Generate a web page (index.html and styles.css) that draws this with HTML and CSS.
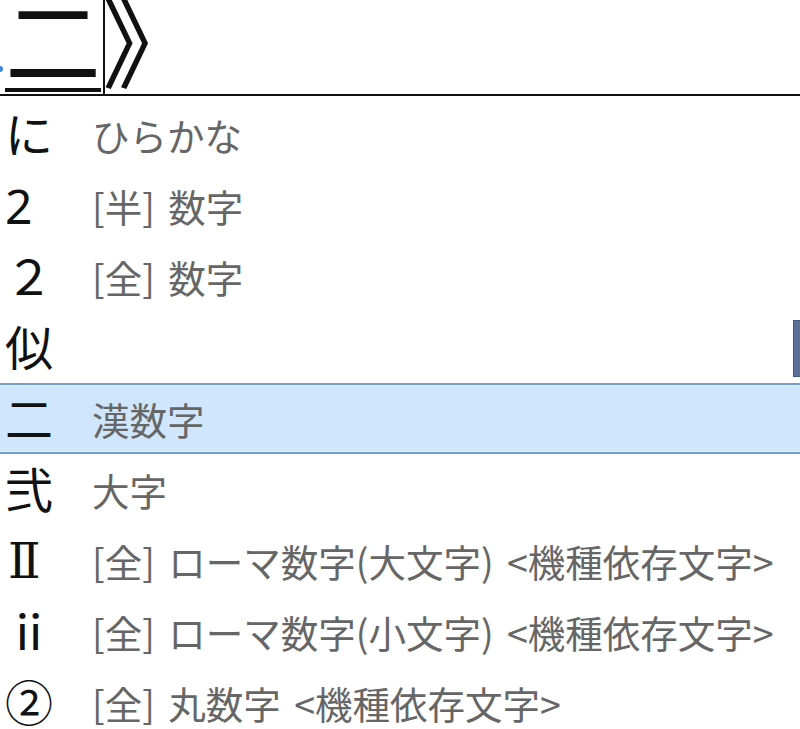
FILE: index.html
```html
<!DOCTYPE html>
<html lang="ja">
<head>
    <meta charset="UTF-8">
    <meta name="viewport" content="width=device-width, initial-scale=1.0">
    <title>IME 変換候補</title>
    <link rel="stylesheet" href="styles.css">
</head>
<body>
    <div class="preedit">
        <span class="dot"></span>
        <span class="reading">二</span>
        <span class="caret"></span>
        <span class="bracket">》</span>
    </div>

    <ul class="candidates">
        <li class="row"><span class="cand">に</span><span class="note">ひらかな</span></li>
        <li class="row"><span class="cand">2</span><span class="note">[半] 数字</span></li>
        <li class="row"><span class="cand">２</span><span class="note">[全] 数字</span></li>
        <li class="row"><span class="cand">似</span><span class="note"></span></li>
        <li class="row selected"><span class="cand">二</span><span class="note">漢数字</span></li>
        <li class="row"><span class="cand">弐</span><span class="note">大字</span></li>
        <li class="row"><span class="cand roman">Ⅱ</span><span class="note">[全] ローマ数字(大文字) &lt;機種依存文字&gt;</span></li>
        <li class="row"><span class="cand">ⅱ</span><span class="note">[全] ローマ数字(小文字) &lt;機種依存文字&gt;</span></li>
        <li class="row"><span class="cand">②</span><span class="note">[全] 丸数字 &lt;機種依存文字&gt;</span></li>
    </ul>

    <!-- scroll thumb of the candidate window -->
    <div class="thumb"></div>
</body>
</html>
```

FILE: styles.css
```css
* {
    margin: 0;
    padding: 0;
    box-sizing: border-box;
}

body {
    font-family: "Noto Sans", "Noto Sans CJK JP", sans-serif;
    background: #fff;
    color: #111;
    width: 800px;
    height: 729px;
    overflow: hidden;
    position: relative;
}

/* composition string */
.preedit {
    height: 96px;
    display: flex;
    align-items: flex-end;
    border-bottom: 2px solid #111;
    overflow: hidden;
    position: relative;
}

.reading {
    font-family: "Noto Sans CJK JP", sans-serif;
    font-size: 96px;
    line-height: 70px;
    height: 90px;
    margin-left: 5px;
    margin-bottom: 2px;
    border-bottom: 4px solid #111;
}

.caret {
    width: 2px;
    align-self: stretch;
    background: #111;
    margin-left: 2px;
}

.bracket {
    font-family: "Noto Sans CJK JP", sans-serif;
    font-size: 98px;
    line-height: 70px;
    height: 92px;
    margin-left: -3px;
}

.dot {
    position: absolute;
    left: -3px;
    top: 66px;
    width: 6px;
    height: 6px;
    border-radius: 50%;
    background: #3a86d6;
}

/* candidate list */
.candidates {
    list-style: none;
    padding-top: 3px;
}

.row {
    height: 71px;
    display: flex;
    align-items: center;
}

.row.selected {
    background: #cfe6fc;
    border-top: 2px solid #6f9ed3;
    border-bottom: 2px solid #6f9ed3;
    box-shadow: inset 0 1px 0 #e4f2ff, inset 0 -1px 0 #e4f2ff;
}

.cand {
    flex-shrink: 0;
    width: 92px;
    padding-left: 5px;
    font-size: 48px;
    line-height: 1;
    color: #111;
}

.cand.roman {
    font-family: "DejaVu Serif", "Noto Sans CJK JP", serif;
    font-size: 48px;
    padding-left: 8px;
}

.note {
    font-family: "Noto Sans CJK JP", sans-serif;
    font-size: 37.5px;
    line-height: 1;
    word-spacing: 5px;
    color: #666;
    white-space: nowrap;
}

.thumb {
    position: absolute;
    left: 793px;
    top: 320px;
    width: 8px;
    height: 57px;
    background: #5b6f99;
    border: 1px solid #44597f;
}
```
